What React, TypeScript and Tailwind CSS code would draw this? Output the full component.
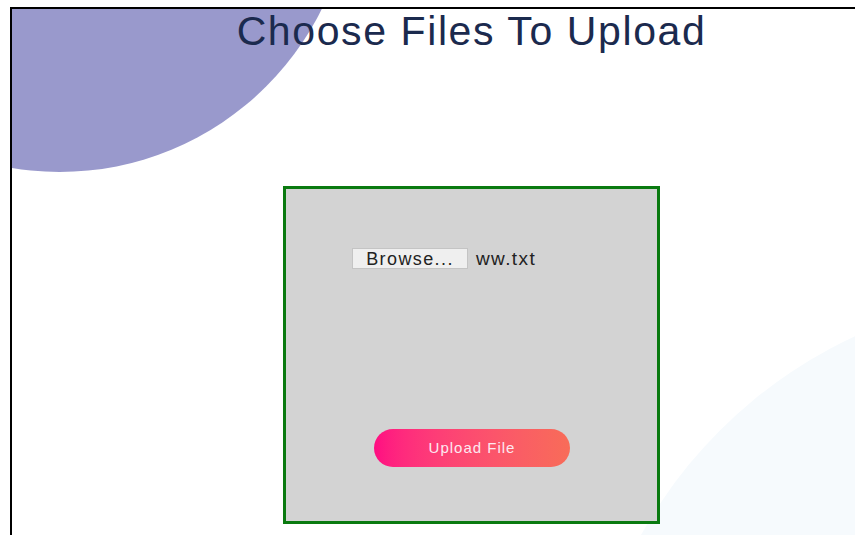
import React, { useState } from 'react';

const FileUploadPage = () => {
  const [fileName] = useState('ww.txt');

  return (
    <div className="w-[855px] h-[535px] bg-white pl-[10px] pt-[7px] overflow-hidden" style={{ fontFamily: '"Liberation Sans", Arial, sans-serif' }}>
      <div className="relative h-full border-l-2 border-t-2 border-black overflow-hidden">
        {/* background blobs */}
        <div className="absolute left-[-245px] top-[-437px] w-[585px] h-[600px] rounded-full bg-[#9999cc]" />
        <div className="absolute left-[570px] top-[284px] w-[940px] h-[940px] rounded-full bg-[#f6fafd]" />

        <div className="relative flex flex-col items-center pl-[76px]">
          <h1 className="mt-[2px] text-[41px] leading-[41px] tracking-[1.6px] text-[#1b2a4e] font-normal">
            Choose Files To Upload
          </h1>

          <div className="mt-[134px] w-[377px] h-[338px] border-[3px] border-[#0a7a10] bg-[#d3d3d3] flex flex-col">
            <div className="mt-[59px] ml-[66px] flex items-center">
              <button className="w-[116px] h-[21px] bg-[#efefef] border border-[#c4c4c4] text-[18px] leading-none tracking-[1.4px] text-[#222]">
                Browse...
              </button>
              <span className="ml-[8px] text-[19px] leading-none tracking-[1.4px] text-[#222]">{fileName}</span>
            </div>

            <button className="mt-[160px] ml-[88px] w-[196px] h-[38px] rounded-full bg-gradient-to-r from-[#ff0a82] to-[#f86c58] text-[15px] tracking-[1px] text-[#fde8f0]">
              Upload File
            </button>
          </div>
        </div>
      </div>
    </div>
  );
};

export default FileUploadPage;
